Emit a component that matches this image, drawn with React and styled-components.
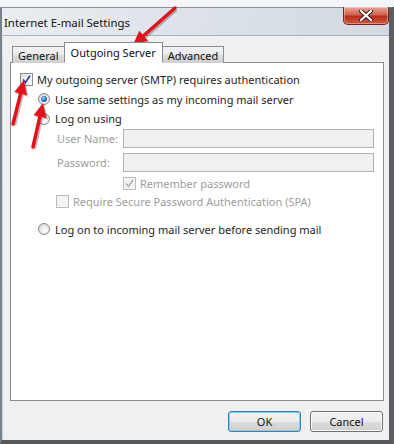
import React from 'react';
import styled, { createGlobalStyle } from 'styled-components';

const GlobalStyle = createGlobalStyle`
  html, body {
    margin: 0;
    padding: 0;
    background: #f4f5f6;
  }
  body {
    font-family: "Noto Sans", "Open Sans", sans-serif;
    font-size: 11px;
    color: #1e1e1e;
  }
`;

const Page = styled.div`
  position: relative;
  width: 394px;
  height: 444px;
  padding-top: 7px;
  box-sizing: border-box;
  overflow: hidden;
`;

const Window = styled.div`
  height: 437px;
  display: flex;
  flex-direction: column;
  background: linear-gradient(180deg, #dde3e9 0%, #cfd7df 40%, #c6ced6 100%);
  border-top: 1px solid #8a9199;
  border-left: 2px solid #7b8188;
  border-right: 5px solid #5a5e63;
  border-bottom: 4px solid #55595e;
  box-sizing: border-box;
`;

const TitleBar = styled.div`
  height: 27px;
  display: flex;
  align-items: flex-start;
  justify-content: space-between;
  padding-left: 2px;
  background: linear-gradient(100deg, #eaeef2 0%, #dde3e9 45%, #d2d9e0 100%);
`;

const Title = styled.div`
  padding-top: 7px;
  font-size: 11.4px;
  color: #111;
`;

const CloseButton = styled.div`
  width: 46px;
  height: 18px;
  margin-top: -1px;
  border: 1px solid #6b2a22;
  border-top: none;
  border-radius: 0 0 5px 5px;
  background: linear-gradient(180deg, #e9a99a 0%, #d0614c 45%, #b8301c 55%, #cf5a3e 100%);
  display: flex;
  align-items: center;
  justify-content: center;
  box-sizing: border-box;
  box-shadow: inset 0 0 0 1px rgba(255, 255, 255, 0.35);
`;

const Client = styled.div`
  flex: 1;
  margin: 0 0 0 1px;
  background: #f0f0f0;
  border-top: 1px solid #a9b1b9;
  display: flex;
  flex-direction: column;
  padding: 6px 4px 0 7px;
`;

const TabStrip = styled.div`
  display: flex;
  align-items: flex-end;
  height: 21px;
  padding-left: 2px;
  position: relative;
  z-index: 1;
`;

const Tab = styled.div`
  height: ${p => (p.$active ? '21px' : '17px')};
  padding: 0 ${p => (p.$active ? '6px' : '5px')};
  margin: 0 ${p => (p.$active ? '-1px' : '0')};
  border: 1px solid #898c95;
  border-bottom: ${p => (p.$active ? '1px solid #fff' : 'none')};
  background: ${p => (p.$active ? '#fff' : 'linear-gradient(180deg, #f2f2f2 0%, #ebebeb 50%, #dddddd 51%, #cfcfcf 100%)')};
  display: flex;
  align-items: ${p => (p.$active ? 'flex-start' : 'center')};
  padding-top: ${p => (p.$active ? '2px' : '0')};
  box-sizing: border-box;
  position: relative;
  z-index: ${p => (p.$active ? 2 : 1)};
  color: #111;
  white-space: nowrap;
`;

const TabPanel = styled.div`
  height: 339px;
  width: 374px;
  margin-top: -1px;
  background: #fff;
  border: 1px solid #898c95;
  box-sizing: border-box;
  padding: 6px 0 0 9px;
  display: flex;
  flex-direction: column;
`;

const Row = styled.div`
  display: flex;
  align-items: center;
  height: ${p => p.$h || 20}px;
  padding-left: ${p => p.$indent || 0}px;
  color: ${p => (p.$disabled ? '#9d9d9d' : '#1e1e1e')};
  white-space: nowrap;
`;

const Box = styled.span`
  width: 13px;
  height: 13px;
  box-sizing: border-box;
  border: 1px solid ${p => (p.$disabled ? '#bcbcbc' : '#8e8f8f')};
  background: ${p => (p.$disabled ? '#f4f4f4' : 'linear-gradient(135deg, #dcdcdc 0%, #f4f4f4 60%, #fff 100%)')};
  margin-right: 4px;
  display: inline-flex;
  align-items: center;
  justify-content: center;
  flex-shrink: 0;
`;

const Radio = styled.span`
  width: 12px;
  height: 12px;
  box-sizing: border-box;
  border-radius: 50%;
  border: 1px solid #8a8a8a;
  background: radial-gradient(circle at 60% 65%, #ffffff 0%, #e4e4e4 60%, #c9c9c9 100%);
  margin-right: 5px;
  display: inline-flex;
  align-items: center;
  justify-content: center;
  flex-shrink: 0;
  &::after {
    content: '';
    display: ${p => (p.$checked ? 'block' : 'none')};
    width: 6px;
    height: 6px;
    border-radius: 50%;
    background: radial-gradient(circle at 40% 35%, #8fd0ff 0%, #1e6fb8 55%, #0d3f73 100%);
  }
`;

const FieldLabel = styled.span`
  width: 66px;
  color: #9d9d9d;
`;

const Field = styled.div`
  width: 251px;
  height: 19px;
  box-sizing: border-box;
  border: 1px solid #adb2b5;
  background: #f0f0f0;
`;

const Footer = styled.div`
  flex: 1;
  display: flex;
  justify-content: flex-end;
  align-items: flex-start;
  gap: 9px;
  padding: 10px 2px 0 0;
`;

const Button = styled.button`
  width: 73px;
  height: 21px;
  font-family: inherit;
  font-size: 11px;
  color: #111;
  border-radius: 3px;
  border: 1px solid ${p => (p.$default ? '#3c7fb1' : '#707070')};
  background: linear-gradient(180deg, #f2f2f2 0%, #ebebeb 50%, #dddddd 51%, #cfcfcf 100%);
  box-shadow: ${p => (p.$default ? 'inset 0 0 0 1px #7ed0f5' : 'inset 0 0 0 1px #fcfcfc')};
  padding: 0;
`;

const Overlay = styled.svg`
  position: absolute;
  inset: 0;
  pointer-events: none;
`;

const Check = ({ color = '#2a3a8c' }) => (
  <svg width="9" height="9" viewBox="0 0 9 9">
    <path d="M1 4.5 L3.5 7.5 L8 0.8" fill="none" stroke={color} strokeWidth="1.6" />
  </svg>
);

function Arrow({ x1, y1, x2, y2 }) {
  const a = Math.atan2(y2 - y1, x2 - x1);
  const len = 14;
  const w = 6.5;
  const bx = x2 - len * Math.cos(a);
  const by = y2 - len * Math.sin(a);
  const px = -Math.sin(a) * w;
  const py = Math.cos(a) * w;
  const head = `${x2},${y2} ${bx + px},${by + py} ${bx - px},${by - py}`;
  const shadow = head.split(' ').map(p => p.split(',').map(v => +v + 1.5).join(',')).join(' ');
  return (
    <g>
      <line x1={x1 + 1.5} y1={y1 + 1.5} x2={bx + 1.5} y2={by + 1.5} stroke="rgba(0,0,0,0.25)" strokeWidth="3.5" />
      <polygon points={shadow} fill="rgba(0,0,0,0.25)" />
      <line x1={x1} y1={y1} x2={bx} y2={by} stroke="#e3111b" strokeWidth="3.5" strokeLinecap="round" />
      <polygon points={head} fill="#e3111b" />
    </g>
  );
}

export default function App() {
  return (
    <Page>
      <GlobalStyle />
      <Window>
        <TitleBar>
          <Title>Internet E-mail Settings</Title>
          <CloseButton>
            <svg width="14" height="11" viewBox="0 0 14 11">
              <path d="M2 1 L12 10 M12 1 L2 10" stroke="#3b1a14" strokeWidth="4" strokeLinecap="round" />
              <path d="M2 1 L12 10 M12 1 L2 10" stroke="#fff" strokeWidth="2.2" strokeLinecap="round" />
            </svg>
          </CloseButton>
        </TitleBar>
        <Client>
          <TabStrip>
            <Tab>General</Tab>
            <Tab $active>Outgoing Server</Tab>
            <Tab>Advanced</Tab>
          </TabStrip>
          <TabPanel>
            <Row>
              <Box><Check /></Box>
              My outgoing server (SMTP) requires authentication
            </Row>
            <Row $indent={18}>
              <Radio $checked />
              Use same settings as my incoming mail server
            </Row>
            <Row $indent={18} $h={19}>
              <Radio />
              Log on using
            </Row>
            <Row $indent={37} $h={21}>
              <FieldLabel>User Name:</FieldLabel>
              <Field />
            </Row>
            <Row $indent={37} $h={26}>
              <FieldLabel>Password:</FieldLabel>
              <Field />
            </Row>
            <Row $indent={103} $disabled $h={16}>
              <Box $disabled><Check color="#b0b0b0" /></Box>
              Remember password
            </Row>
            <Row $indent={36} $disabled>
              <Box $disabled />
              Require Secure Password Authentication (SPA)
            </Row>
            <Row $indent={18} $h={36}>
              <Radio />
              Log on to incoming mail server before sending mail
            </Row>
          </TabPanel>
          <Footer>
            <Button $default>OK</Button>
            <Button>Cancel</Button>
          </Footer>
        </Client>
      </Window>
      <Overlay width="394" height="444" viewBox="0 0 394 444">
        <Arrow x1={175} y1={8} x2={133} y2={45} />
        <Arrow x1={13} y1={124} x2={24} y2={80} />
        <Arrow x1={33} y1={147} x2={43} y2={103} />
      </Overlay>
    </Page>
  );
}
